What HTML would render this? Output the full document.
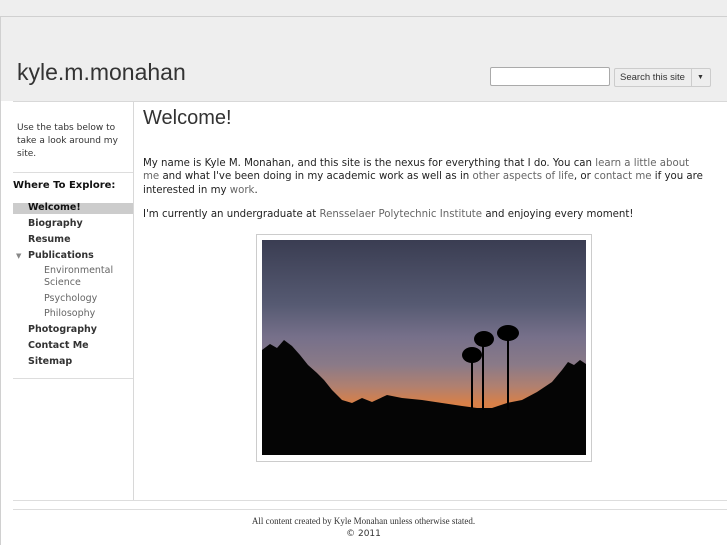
<!DOCTYPE html>
<html><head><style>
body{margin:0;width:727px;height:545px;overflow:hidden;background:#fff;font-family:"DejaVu Sans","Liberation Sans",sans-serif;position:relative}
.a{position:absolute}
a{color:#666;text-decoration:none}
.nav div{position:absolute;left:28px;font-size:9.5px;font-weight:bold;color:#333}
.nav .s{font-weight:normal;color:#666;left:44px}
</style></head><body>
<div class="a" style="left:0;top:0;width:727px;height:16px;background:#eeeeee"></div>
<div class="a" style="left:0;top:16px;width:727px;height:85px;background:#eeeeee;border-top:1px solid #d0d0d0;border-left:1px solid #d0d0d0;box-sizing:border-box"></div>
<div class="a" style="left:0;top:101px;width:1px;height:444px;background:#d0d0d0"></div>
<div class="a" style="left:13px;top:101px;width:714px;height:1px;background:#d8d8d8"></div>
<div class="a" style="left:17px;top:59px;font-family:'Liberation Sans',sans-serif;font-size:23px;color:#333">kyle.m.monahan</div>
<div class="a" style="left:490px;top:67px;width:118px;height:17px;border:1px solid #aaa;border-radius:2px;background:#fff"></div>
<div class="a" style="left:614px;top:68px;width:95px;height:17px;border:1px solid #ccc;border-radius:2px;background:#eee;font-family:'Liberation Sans',sans-serif;font-size:9.5px;color:#333;line-height:17px"><span style="padding-left:5px">Search this site</span><span style="position:absolute;left:76px;top:0;width:1px;height:17px;background:#ccc"></span><span style="position:absolute;left:82px;top:0;font-size:7px">▼</span></div>

<div class="a" style="left:133px;top:102px;width:1px;height:398px;background:#d8d8d8"></div>
<div class="a" style="left:17px;top:122px;font-size:9px;color:#333;line-height:13px;width:110px">Use the tabs below to take a look around my site.</div>
<div class="a" style="left:13px;top:172px;width:120px;height:1px;background:#ddd"></div>
<div class="a" style="left:13px;top:180px;font-size:10px;font-weight:bold;color:#111">Where To Explore:</div>
<div class="a" style="left:13px;top:203px;width:120px;height:11px;background:#cccccc"></div>
<div class="nav">
<div style="top:202px;color:#111">Welcome!</div>
<div style="top:218px">Biography</div>
<div style="top:234px">Resume</div>
<div style="left:16px;font-size:7px;color:#888;top:252px">▼</div>
<div style="top:250px">Publications</div>
<div class="s" style="top:265px;line-height:12px">Environmental<br>Science</div>
<div class="s" style="top:293px">Psychology</div>
<div class="s" style="top:308px">Philosophy</div>
<div style="top:324px">Photography</div>
<div style="top:340px">Contact Me</div>
<div style="top:356px">Sitemap</div>
</div>
<div class="a" style="left:13px;top:378px;width:120px;height:1px;background:#ddd"></div>

<div class="a" style="left:143px;top:107px;font-family:'Liberation Sans',sans-serif;font-size:20px;color:#333">Welcome!</div>
<div class="a" style="left:143px;top:157px;width:560px;font-size:10.2px;line-height:13.3px;color:#222">My name is Kyle M. Monahan, and this site is the nexus for everything that I do. You can <a>learn a little about me</a> and what I've been doing in my academic work as well as in <a>other aspects of life</a>, or <a>contact me</a> if you are interested in my <a>work</a>.</div>
<div class="a" style="left:143px;top:209px;font-size:10.2px;color:#222;white-space:nowrap">I'm currently an undergraduate at <a>Rensselaer Polytechnic Institute</a> and enjoying every moment!</div>

<div class="a" style="left:256px;top:234px;width:334px;height:226px;border:1px solid #ccc;background:#fff"></div>
<svg class="a" style="left:262px;top:240px" width="324" height="215" viewBox="0 0 324 215">
<defs><linearGradient id="g" x1="0" y1="0" x2="0" y2="1">
<stop offset="0" stop-color="#3a3d52"/><stop offset="0.3" stop-color="#565a72"/><stop offset="0.45" stop-color="#76708a"/><stop offset="0.58" stop-color="#8a7a88"/><stop offset="0.68" stop-color="#b08070"/><stop offset="0.76" stop-color="#d88048"/></linearGradient></defs>
<rect width="324" height="215" fill="url(#g)"/>
<path d="M0 110 L8 104 L15 108 L22 100 L30 106 L38 115 L46 125 L55 133 L62 140 L70 150 L80 160 L90 163 L100 158 L110 162 L125 155 L140 158 L160 160 L180 163 L200 166 L215 168 L230 168 L245 163 L260 160 L275 152 L290 142 L300 130 L306 122 L312 125 L318 120 L324 124 L324 215 L0 215Z" fill="#050505"/>
<g fill="#000"><rect x="209" y="110" width="2" height="58"/><rect x="220" y="100" width="2" height="70"/><rect x="245" y="96" width="2" height="74"/>
<ellipse cx="210" cy="115" rx="10" ry="8"/><ellipse cx="222" cy="99" rx="10" ry="8"/><ellipse cx="246" cy="93" rx="11" ry="8"/></g>
</svg>

<div class="a" style="left:13px;top:500px;width:714px;height:1px;background:#ddd"></div>
<div class="a" style="left:13px;top:509px;width:714px;height:1px;background:#ddd"></div>
<div class="a" style="left:0;top:516px;width:727px;text-align:center;font-family:'Liberation Serif',serif;font-size:9px;color:#333">All content created by Kyle Monahan unless otherwise stated.</div>
<div class="a" style="left:0;top:529px;width:727px;text-align:center;font-size:9px;color:#333">© 2011</div>
</body></html>
